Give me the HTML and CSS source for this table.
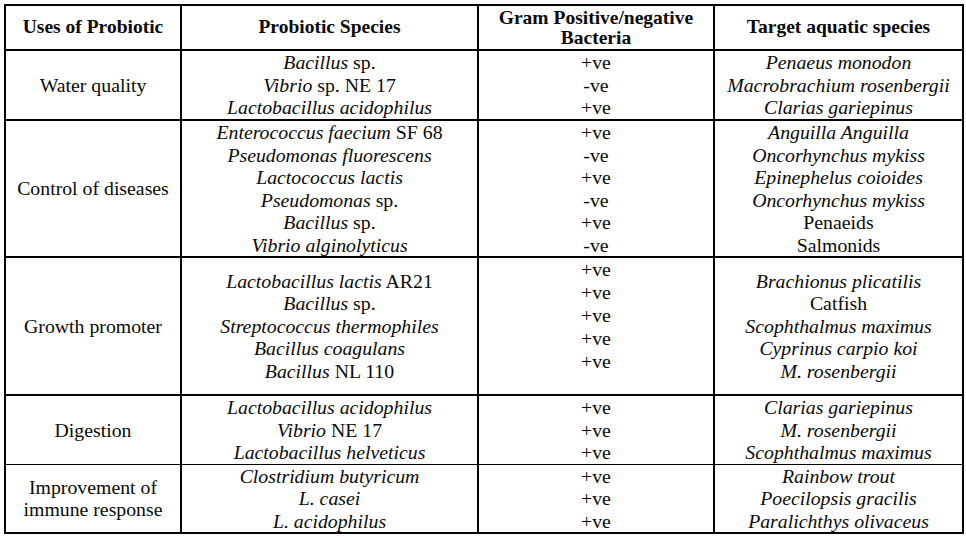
FILE: index.html
```html
<!DOCTYPE html>
<html>
<head>
<meta charset="utf-8">
<link rel="stylesheet" href="styles.css">
</head>
<body>
<table class="probiotics">
  <colgroup>
    <col class="c1"><col class="c2"><col class="c3"><col class="c4">
  </colgroup>
  <thead>
    <tr class="r-head">
      <th>Uses of Probiotic</th>
      <th>Probiotic Species</th>
      <th class="two">Gram Positive/negative<br>Bacteria</th>
      <th>Target aquatic species</th>
    </tr>
  </thead>
  <tbody>
    <tr class="r-water">
      <td>Water quality</td>
      <td><i>Bacillus</i> sp.<br><i>Vibrio</i> sp. NE 17<br><i>Lactobacillus acidophilus</i></td>
      <td>+ve<br>-ve<br>+ve</td>
      <td><i>Penaeus monodon</i><br><i>Macrobrachium rosenbergii</i><br><i>Clarias gariepinus</i></td>
    </tr>
    <tr class="r-control">
      <td>Control of diseases</td>
      <td><i>Enterococcus faecium</i> SF 68<br><i>Pseudomonas fluorescens</i><br><i>Lactococcus lactis</i><br><i>Pseudomonas</i> sp.<br><i>Bacillus</i> sp.<br><i>Vibrio alginolyticus</i></td>
      <td>+ve<br>-ve<br>+ve<br>-ve<br>+ve<br>-ve</td>
      <td><i>Anguilla Anguilla</i><br><i>Oncorhynchus mykiss</i><br><i>Epinephelus coioides</i><br><i>Oncorhynchus mykiss</i><br>Penaeids<br>Salmonids</td>
    </tr>
    <tr class="r-growth">
      <td>Growth promoter</td>
      <td><i>Lactobacillus lactis</i> AR21<br><i>Bacillus</i> sp.<br><i>Streptococcus thermophiles</i><br><i>Bacillus coagulans</i><br><i>Bacillus</i> NL 110</td>
      <td class="top">+ve<br>+ve<br>+ve<br>+ve<br>+ve</td>
      <td><i>Brachionus plicatilis</i><br>Catfish<br><i>Scophthalmus maximus</i><br><i>Cyprinus carpio koi</i><br><i>M. rosenbergii</i></td>
    </tr>
    <tr class="r-digest">
      <td>Digestion</td>
      <td><i>Lactobacillus acidophilus</i><br><i>Vibrio</i> NE 17<br><i>Lactobacillus helveticus</i></td>
      <td>+ve<br>+ve<br>+ve</td>
      <td><i>Clarias gariepinus</i><br><i>M. rosenbergii</i><br><i>Scophthalmus maximus</i></td>
    </tr>
    <tr class="r-immune">
      <td>Improvement of<br>immune response</td>
      <td><i>Clostridium butyricum</i><br><i>L. casei</i><br><i>L. acidophilus</i></td>
      <td>+ve<br>+ve<br>+ve</td>
      <td><i>Rainbow trout</i><br><i>Poecilopsis gracilis</i><br><i>Paralichthys olivaceus</i></td>
    </tr>
  </tbody>
</table>
</body>
</html>
```

FILE: styles.css
```css
html, body {
  margin: 0;
  padding: 0;
  background: #fff;
}
body {
  padding: 4px 0 0 4px;
}
.probiotics {
  border-collapse: collapse;
  table-layout: fixed;
  width: 958px;
  font-family: "Liberation Serif", "Times New Roman", serif;
  font-size: 19.8px;
  line-height: 22.5px;
  color: #0a0a0a;
}
.c1 { width: 176px; }
.c2 { width: 297px; }
.c3 { width: 236px; }
.c4 { width: 249px; }
.probiotics th,
.probiotics td {
  border: 2px solid #000;
  padding: 0;
  text-align: center;
  vertical-align: middle;
}
.probiotics th {
  font-weight: bold;
  font-size: 19.5px;
}
.probiotics th.two {
  line-height: 20px;
}
.r-head { height: 45px; }
.r-water { height: 70px; }
.r-control { height: 137px; }
.r-growth { height: 138px; }
.r-digest { height: 69px; }
.r-immune { height: 67px; }
.probiotics td.top {
  vertical-align: top;
  line-height: 23px;
}
.r-digest td { border-bottom-width: 1px; }
.r-immune td { border-top-width: 1px; }
```
